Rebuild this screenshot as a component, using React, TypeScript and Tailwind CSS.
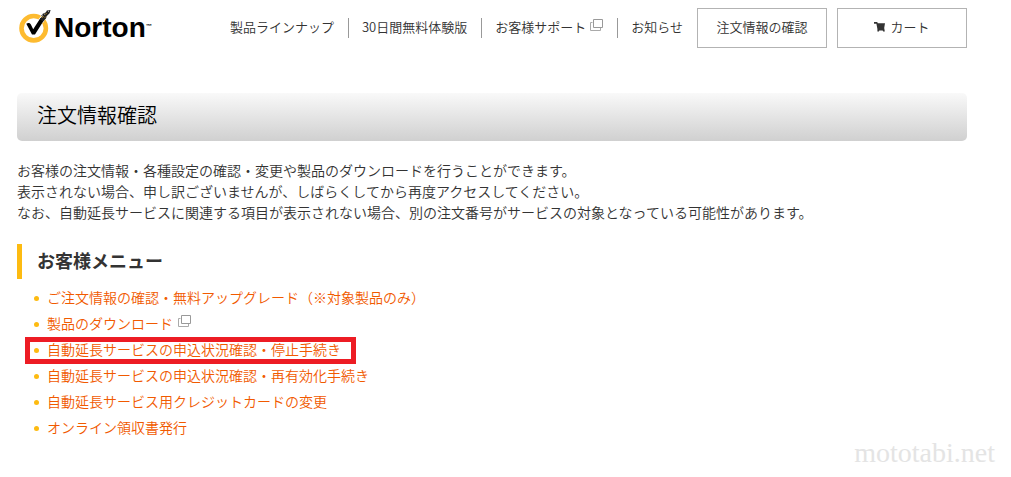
import type { ReactNode } from 'react'

const navItems = [
  { label: '製品ラインナップ' },
  { label: '30日間無料体験版' },
  { label: 'お客様サポート', external: true },
  { label: 'お知らせ' },
]

const menuItems = [
  { label: 'ご注文情報の確認・無料アップグレード（※対象製品のみ）' },
  { label: '製品のダウンロード', external: true },
  { label: '自動延長サービスの申込状況確認・停止手続き', marked: true },
  { label: '自動延長サービスの申込状況確認・再有効化手続き' },
  { label: '自動延長サービス用クレジットカードの変更' },
  { label: 'オンライン領収書発行' },
]

function ExternalIcon() {
  return (
    <svg width="13" height="12" viewBox="0 0 13 12" fill="none" className="inline-block shrink-0 mb-1" aria-hidden="true">
      <path d="M2.5 3.5H.5v8h10V9" stroke="#aaa" />
      <path d="M3.5.5h9v8h-9z" stroke="#999" fill="#fff" />
    </svg>
  )
}

function CartIcon() {
  return (
    <svg width="12" height="11" viewBox="0 0 12 11" fill="#333" aria-hidden="true">
      <path d="M0 0h3.200l.6 1.200H11L10.200 6l.6 3.500H9.200L8.700 8.500H5.300L4.900 9.500H3.400V7L2.400 1.800H0z" />
    </svg>
  )
}

function Logo() {
  return (
    <a href="#" className="flex items-start text-black">
      <svg width="34" height="36" viewBox="0 0 34 36" fill="none" className="mr-[3px]" aria-hidden="true">
        <circle cx="16.7" cy="20.2" r="12.2" stroke="#fdbb30" strokeWidth="4.6" />
        <path d="M21 12L28 3l5-1-7 13z" fill="#fff" />
        <path d="M9.300 15.800c1.800-1.500 3.900-1 4.700.9l2.200 4.600L23.500 10l3.600 2L18 26.500h-3z" fill="#000" />
        <path d="M22.600 11.600L26 7l-.6-1.100L29 4.200l.8-1.700L33.600 2l-1 3.200-3 3-.4 1.800-2.700 3.200z" fill="#222" />
        <path d="M24.500 7.800l1.300-1.300M30.800 5.800l.9-.8M27.500 11l.9-1" stroke="#222" />
        <path d="M25.200 9.600l1.100-1.400M28.300 6.400l1-1M28 9.500l.6-.7" stroke="#fdbb30" />
        <path d="M27 6.500l.6-.5M31 3.600l.7-.4" stroke="#fff" />
      </svg>
      <span className="font-['Liberation_Sans',sans-serif] text-[28px] leading-10 font-bold">Norton</span>
      <span className="font-['Liberation_Sans',sans-serif] text-[6px] leading-3 font-bold pt-3">™</span>
    </a>
  )
}

function HeaderButton({ children }: { children: ReactNode }) {
  return (
    <button type="button" className="flex h-10 w-[130px] items-center justify-center gap-1 border border-[#b3b3b3] bg-white pb-[2px]">
      {children}
    </button>
  )
}

export default function App() {
  return (
    <div className="relative min-h-screen bg-white pt-2 pr-11 pb-9 pl-[17px] font-['Noto_Sans_CJK_JP',sans-serif] text-sm font-[350] text-[#333]">
      <div className="max-w-[950px]">

        <header className="flex items-center justify-between text-[13px]">
          <Logo />
          <div className="flex items-center">
            <nav className="flex items-center">
              {navItems.map((item) => (
                <a key={item.label} href="#" className="flex h-5 items-center gap-1 border-r border-[#999] pr-[14px] pb-[2px] pl-[13px] whitespace-nowrap last:border-r-0">
                  {item.label}
                  {item.external && <ExternalIcon />}
                </a>
              ))}
            </nav>
            <div className="flex gap-[10px]">
              <HeaderButton>注文情報の確認</HeaderButton>
              <HeaderButton>
                <CartIcon />
                カート
              </HeaderButton>
            </div>
          </div>
        </header>

        <main>
          <h1 className="mt-[45px] h-12 rounded-[5px] bg-linear-to-b from-[#f9f9f9] to-[#d0d0d0] px-5 text-xl leading-[44px] font-[350] text-black">
            注文情報確認
          </h1>

          <p className="mt-[19px] leading-[21px]">
            お客様の注文情報・各種設定の確認・変更や製品のダウンロードを行うことができます。<br />
            表示されない場合、申し訳ございませんが、しばらくしてから再度アクセスしてください。<br />
            なお、自動延長サービスに関連する項目が表示されない場合、別の注文番号がサービスの対象となっている可能性があります。
          </p>

          <h2 className="mt-[21px] h-[35px] border-l-5 border-[#fdbb11] pl-[15px] text-lg leading-8 font-bold">お客様メニュー</h2>

          <ul className="mt-[6px] pl-[17px] text-[#f15a00]">
            {menuItems.map((item) => (
              <li key={item.label} className="relative flex h-[26px] items-center">
                <span className="mr-2 size-[5px] rounded-full bg-[#fdbb11]"></span>
                <a href="#" className="flex items-center gap-[5px] pb-[2px]">
                  {item.label}
                  {item.external && <ExternalIcon />}
                </a>
                {item.marked && (
                  <span className="pointer-events-none absolute top-0 -left-[9px] h-[27px] w-[331px] border-5 border-[#ed1c24]"></span>
                )}
              </li>
            ))}
          </ul>
        </main>

      </div>

      <p className="absolute right-4 bottom-2 font-['Liberation_Serif',serif] text-[28px] leading-8 text-[#e4e4e4]">mototabi.net</p>
    </div>
  )
}
